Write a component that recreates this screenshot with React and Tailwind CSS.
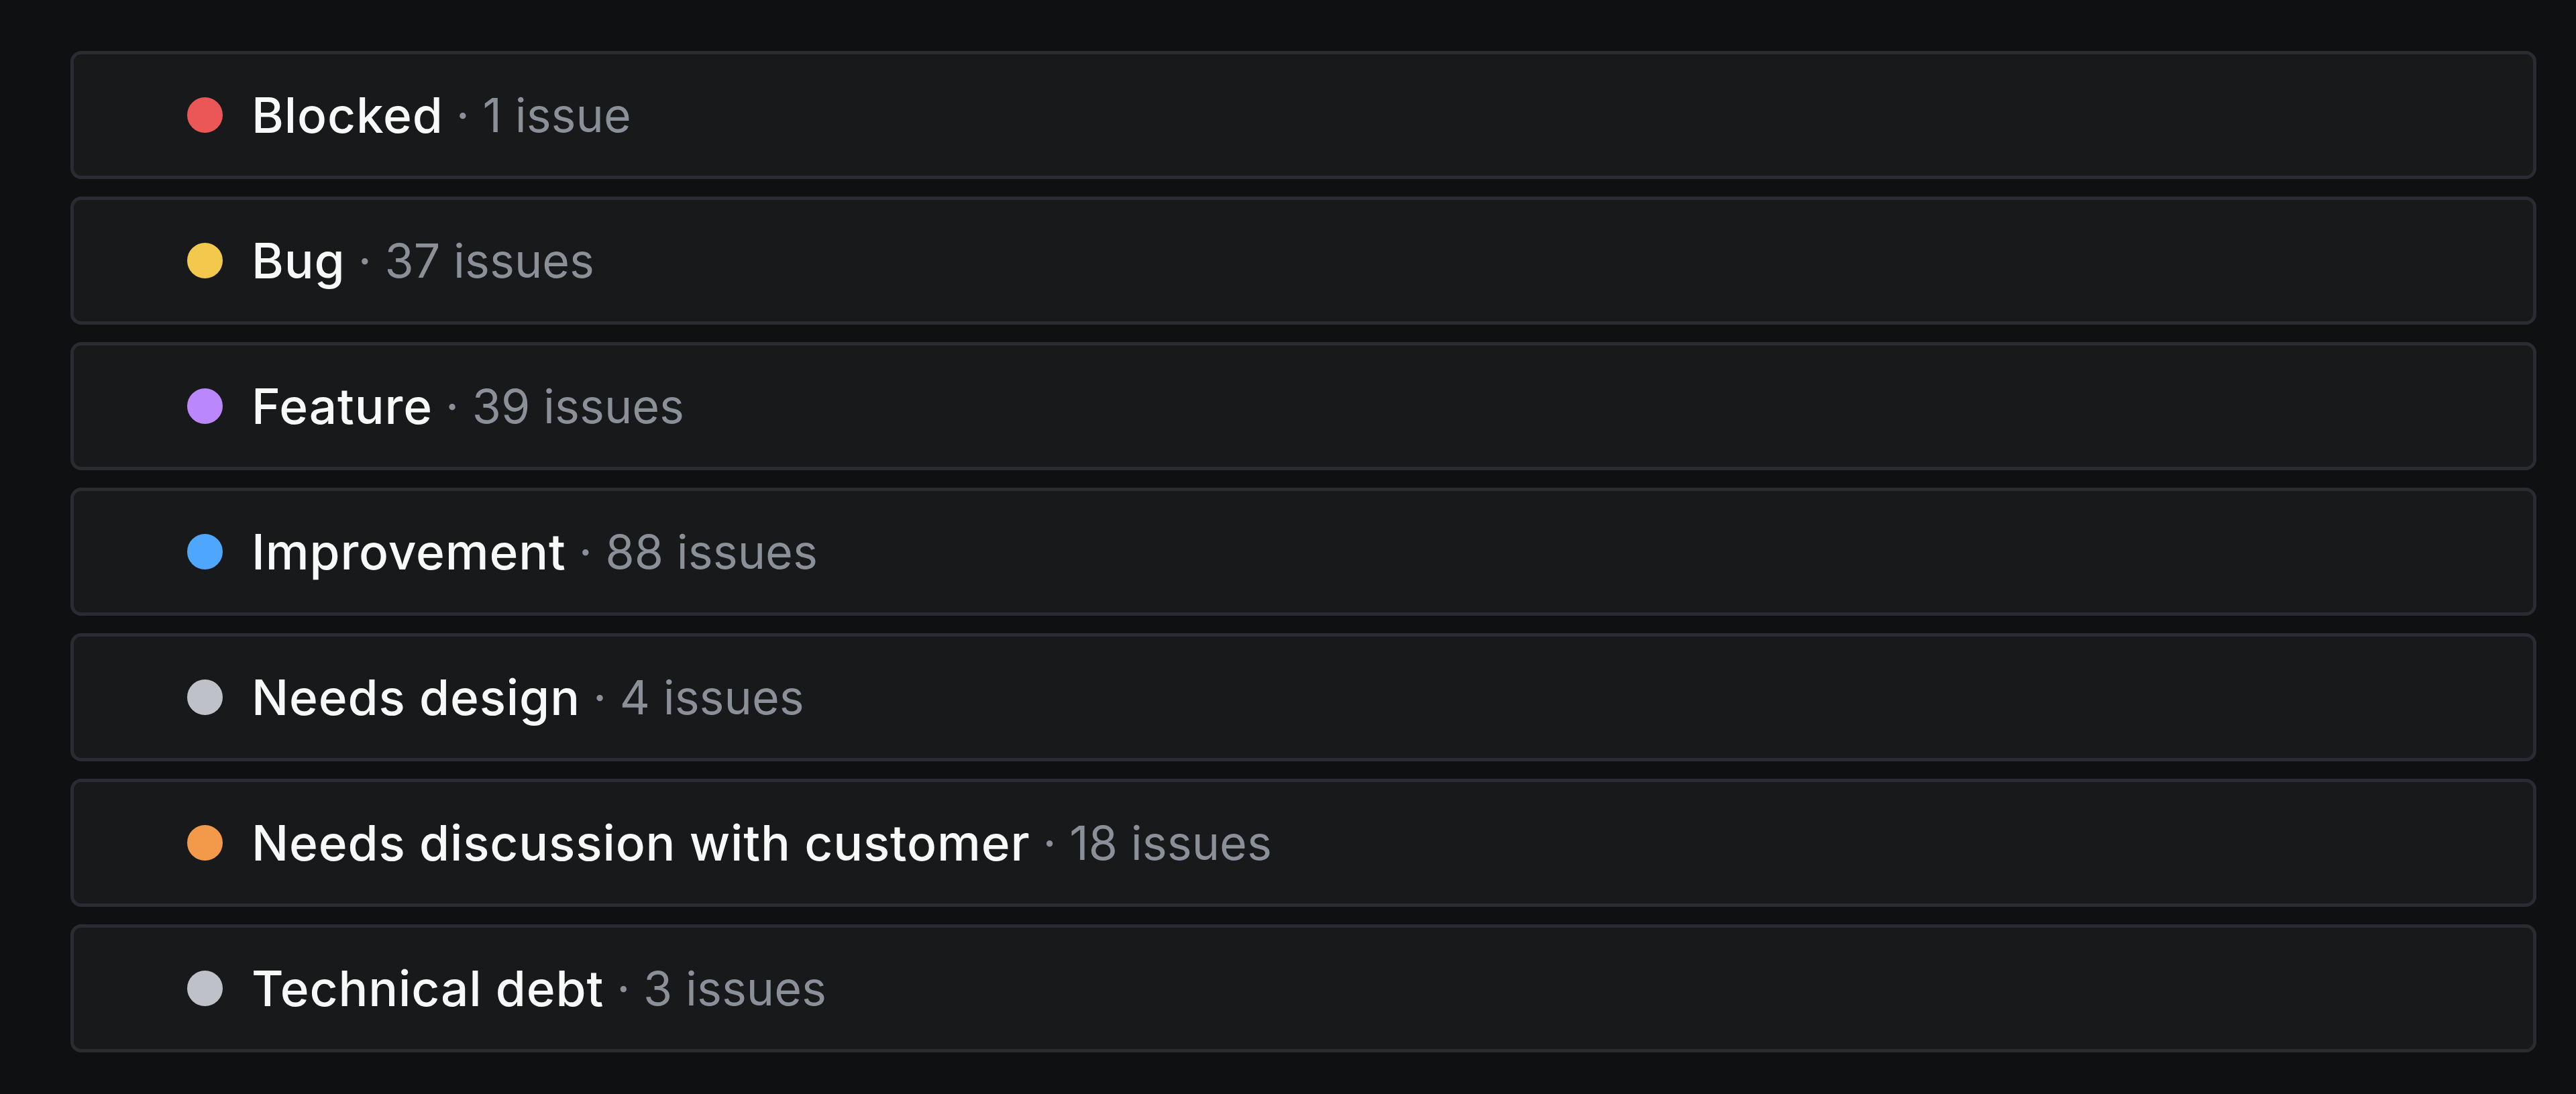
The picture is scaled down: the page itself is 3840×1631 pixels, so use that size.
import React from "react";

const rows = [
  { name: "Blocked", count: "1 issue", color: "bg-[#eb5757]" },
  { name: "Bug", count: "37 issues", color: "bg-[#f2c94c]" },
  { name: "Feature", count: "39 issues", color: "bg-[#bb87fc]" },
  { name: "Improvement", count: "88 issues", color: "bg-[#4ea7fc]" },
  { name: "Needs design", count: "4 issues", color: "bg-[#bec2c8]" },
  { name: "Needs discussion with customer", count: "18 issues", color: "bg-[#f2994a]" },
  { name: "Technical debt", count: "3 issues", color: "bg-[#bec2c8]" },
];

export default function App() {
  return (
    <div
      className="min-h-[1631px] w-full bg-[#0f1012] pt-[76px] pb-[61px] pl-[105px] pr-[59px]"
      style={{ fontFamily: "Inter, 'Noto Sans', sans-serif" }}
    >
      <div className="flex flex-col gap-[26px]">
        {rows.map((r) => (
          <div
            key={r.name}
            className="flex h-[191px] items-center rounded-[16px] border-[5px] border-[#2b2c31] bg-[#18191b] pl-[169px]"
          >
            <span className={`h-[53px] w-[53px] shrink-0 rounded-full ${r.color}`} />
            <span className="ml-[43px] text-[73px] font-medium leading-none tracking-[0.85px] text-[#f7f8f8]">
              {r.name}
            </span>
            <span className="ml-[19px] text-[70px] font-normal leading-none text-[#8a8f98]">
              · {r.count}
            </span>
          </div>
        ))}
      </div>
    </div>
  );
}
